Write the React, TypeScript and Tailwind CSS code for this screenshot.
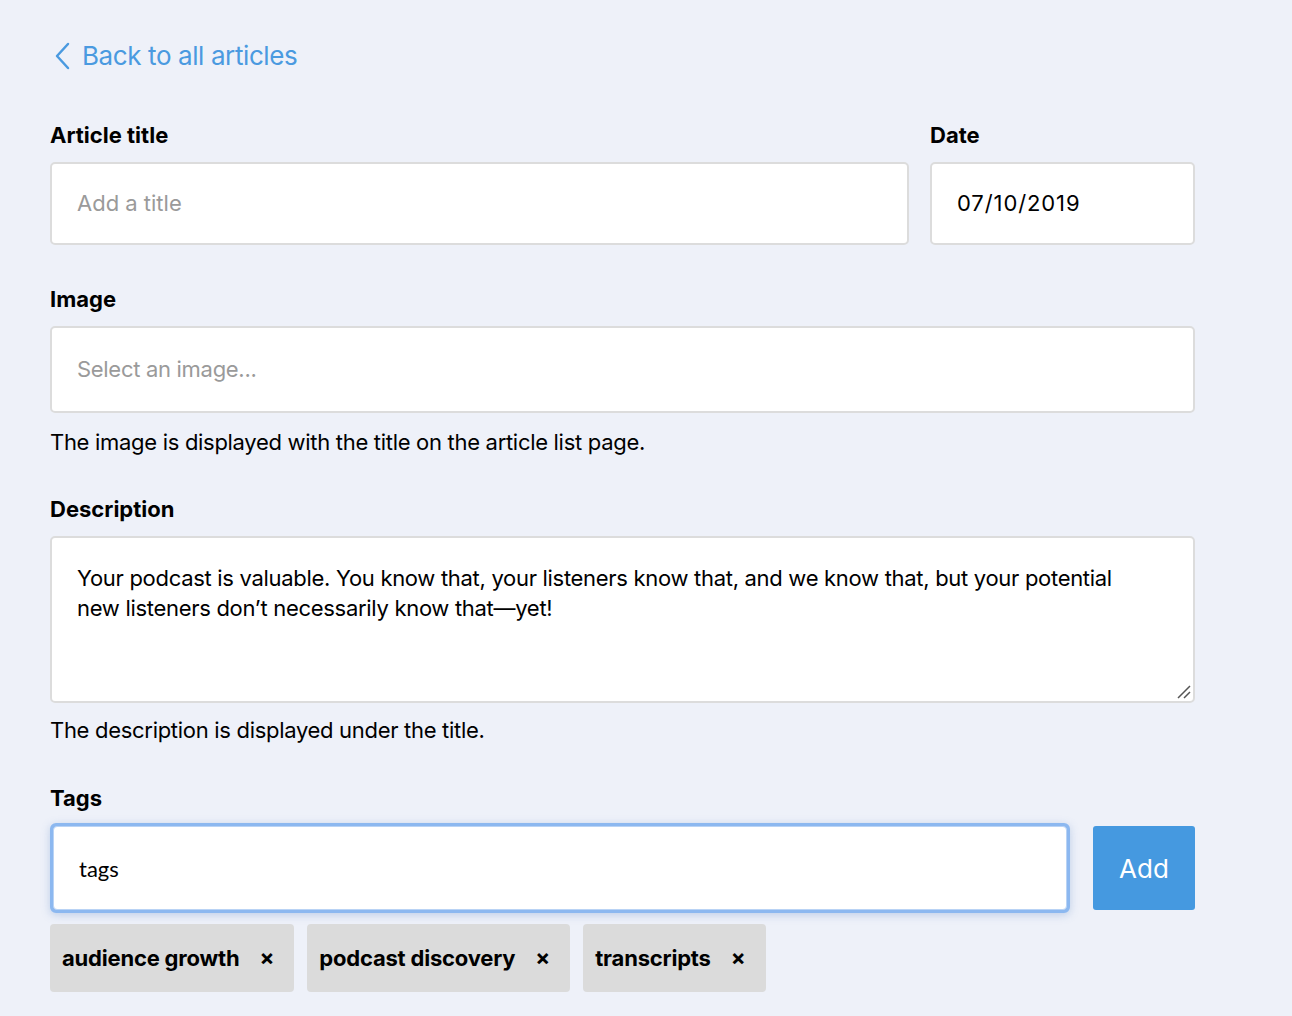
import React from "react";

function Chip({ label }: { label: string }) {
  return (
    <div className="flex h-[68px] items-center rounded-[4px] bg-[#dbdbdb] pl-[12px] pr-[20px]">
      <span className="text-[22px] font-bold tracking-[-0.2px] text-black">{label}</span>
      <span className="mb-[3px] ml-[20px] text-[22px] font-bold leading-none text-black">×</span>
    </div>
  );
}

export default function App() {
  return (
    <div className="min-h-[1016px] bg-[#eef1f9] pl-[50px] pr-[97px] pt-[36px] text-black" style={{ fontFamily: "Inter, 'Noto Sans', sans-serif" }}>
      <a className="flex items-center gap-[10px] text-[26px] text-[#4a9ae0]">
        <svg width="18" height="28" viewBox="0 0 18 28" className="ml-[4px]">
          <path d="M14 2 L3 14 L14 26" fill="none" stroke="#4a9ae0" strokeWidth="2.5" strokeLinecap="round" strokeLinejoin="round" />
        </svg>
        <span className="tracking-[-0.4px]">Back to all articles</span>
      </a>

      <div className="mt-[45px] flex gap-[21px]">
        <div className="flex-1">
          <div className="text-[22px] font-bold leading-[30px]">Article title</div>
          <div className="mt-[12px] flex h-[83px] items-center rounded-[5px] border-2 border-[#dcdcdc] bg-white px-[25px] text-[22px] text-[#9a9a9a]">Add a title</div>
        </div>
        <div className="w-[265px]">
          <div className="text-[22px] font-bold leading-[30px]">Date</div>
          <div className="mt-[12px] flex h-[83px] items-center rounded-[5px] border-2 border-[#dcdcdc] bg-white px-[25px] text-[22px] tracking-[0.9px]">07/10/2019</div>
        </div>
      </div>

      <div className="mt-[39px] text-[22px] font-bold leading-[30px]">Image</div>
      <div className="mt-[12px] flex h-[87px] items-center rounded-[5px] border-2 border-[#dcdcdc] bg-white px-[25px] text-[22px] text-[#9a9a9a] tracking-[-0.3px]">Select an image...</div>
      <div className="mt-[14px] text-[22px] leading-[30px] tracking-[-0.3px]">The image is displayed with the title on the article list page.</div>

      <div className="mt-[37px] text-[22px] font-bold leading-[30px]">Description</div>
      <div className="relative mt-[12px] h-[167px] rounded-[5px] border-2 border-[#dcdcdc] bg-white pl-[25px] pr-[60px] pt-[25px] text-[22px] leading-[30px] tracking-[-0.3px]">
        Your podcast is valuable. You know that, your listeners know that, and we know that, but your potential new listeners don’t necessarily know that—yet!
        <svg width="14" height="14" viewBox="0 0 14 14" className="absolute bottom-[2px] right-[2px]">
          <path d="M1 13 L13 1 M7 13 L13 7" stroke="#555" strokeWidth="1.5" />
        </svg>
      </div>
      <div className="mt-[12px] text-[22px] leading-[30px] tracking-[-0.3px]">The description is displayed under the title.</div>

      <div className="mt-[38px] text-[22px] font-bold leading-[30px]">Tags</div>
      <div className="mt-[10px] flex items-center gap-[23px]">
        <div className="flex-1 rounded-[6px] border-[3px] border-[#8cb8f0] bg-[#8cb8f0] shadow-[0_2px_8px_rgba(100,140,200,0.35)]">
          <div className="flex h-[84px] items-center rounded-[4px] border-[1px] border-[#b9d3f5] bg-white px-[25px] text-[22px]" style={{ fontFamily: "Lato, sans-serif" }}>tags</div>
        </div>
        <div className="flex h-[84px] w-[102px] items-center justify-center rounded-[3px] bg-[#4599e0] text-[26px] text-white">Add</div>
      </div>

      <div className="mt-[11px] flex gap-[13px]">
        <Chip label="audience growth" />
        <Chip label="podcast discovery" />
        <Chip label="transcripts" />
      </div>
    </div>
  );
}
